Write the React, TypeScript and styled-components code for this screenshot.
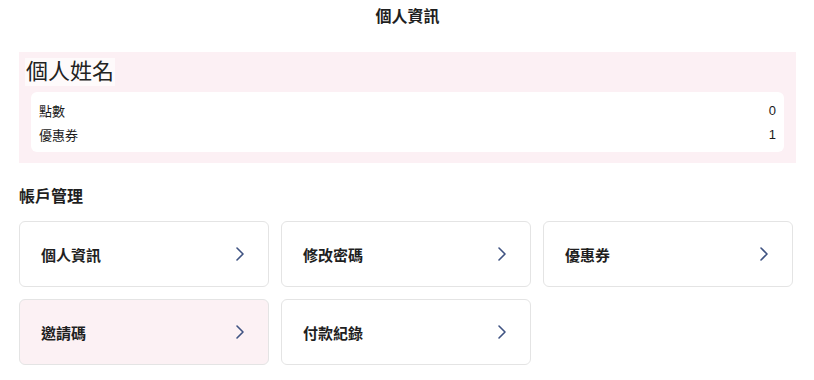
import React from 'react';
import styled, { createGlobalStyle } from 'styled-components';
import { ChevronRight } from 'lucide-react';

const GlobalStyle = createGlobalStyle`
  body {
    margin: 0;
    background: #ffffff;
    font-family: 'Liberation Sans', 'Noto Sans CJK TC', sans-serif;
    color: #1f1f1f;
  }
`;

const Page = styled.div`
  width: 814px;
  padding: 0 18px 0 19px;
  box-sizing: border-box;
`;

const Header = styled.h1`
  margin: 0;
  padding: 8px 0 0;
  height: 52px;
  box-sizing: border-box;
  font-size: 16px;
  line-height: 18px;
  font-weight: 700;
  text-align: center;
`;

const Profile = styled.section`
  background: #fcf0f4;
  padding: 6px 12px 11px 6px;
`;

const Name = styled.div`
  display: inline-block;
  background: #fefafb;
  font-size: 22px;
  line-height: 28px;
  font-weight: 400;
  color: #222222;
  padding: 0 1px;
`;

const PointsCard = styled.div`
  margin: 6px 0 0 6px;
  background: #ffffff;
  border-radius: 6px;
  padding: 6px 8px;
`;

const PointsRow = styled.div`
  display: flex;
  justify-content: space-between;
  align-items: center;
  height: 24px;
  font-size: 13px;
  color: #1a1a1a;
`;

const SectionTitle = styled.h2`
  margin: 23px 0 13px;
  font-size: 16px;
  line-height: 22px;
  font-weight: 700;
`;

const Grid = styled.div`
  width: 774px;
  display: grid;
  grid-template-columns: repeat(3, 1fr);
  column-gap: 12px;
  row-gap: 12px;
`;

const Card = styled.div<{ $active?: boolean }>`
  height: 66px;
  box-sizing: border-box;
  border: 1px solid #e4e4e4;
  border-radius: 6px;
  background: ${(p) => (p.$active ? '#fcf1f4' : '#ffffff')};
  display: flex;
  align-items: center;
  justify-content: space-between;
  padding: 0 16px 0 21px;
  cursor: pointer;
`;

const CardLabel = styled.span`
  font-size: 15px;
  font-weight: 700;
  color: #1f1f1f;
`;

const Arrow = styled(ChevronRight)`
  color: #3f5382;
  flex-shrink: 0;
`;

const menu = [
  { label: '個人資訊' },
  { label: '修改密碼' },
  { label: '優惠券' },
  { label: '邀請碼', active: true },
  { label: '付款紀錄' },
];

function App() {
  return (
    <Page>
      <GlobalStyle />
      <Header>個人資訊</Header>
      <Profile>
        <Name>個人姓名</Name>
        <PointsCard>
          <PointsRow>
            <span>點數</span>
            <span>0</span>
          </PointsRow>
          <PointsRow>
            <span>優惠券</span>
            <span>1</span>
          </PointsRow>
        </PointsCard>
      </Profile>
      <SectionTitle>帳戶管理</SectionTitle>
      <Grid>
        {menu.map((item) => (
          <Card key={item.label} $active={item.active}>
            <CardLabel>{item.label}</CardLabel>
            <Arrow size={24} strokeWidth={1.6} />
          </Card>
        ))}
      </Grid>
    </Page>
  );
}

export default App;
